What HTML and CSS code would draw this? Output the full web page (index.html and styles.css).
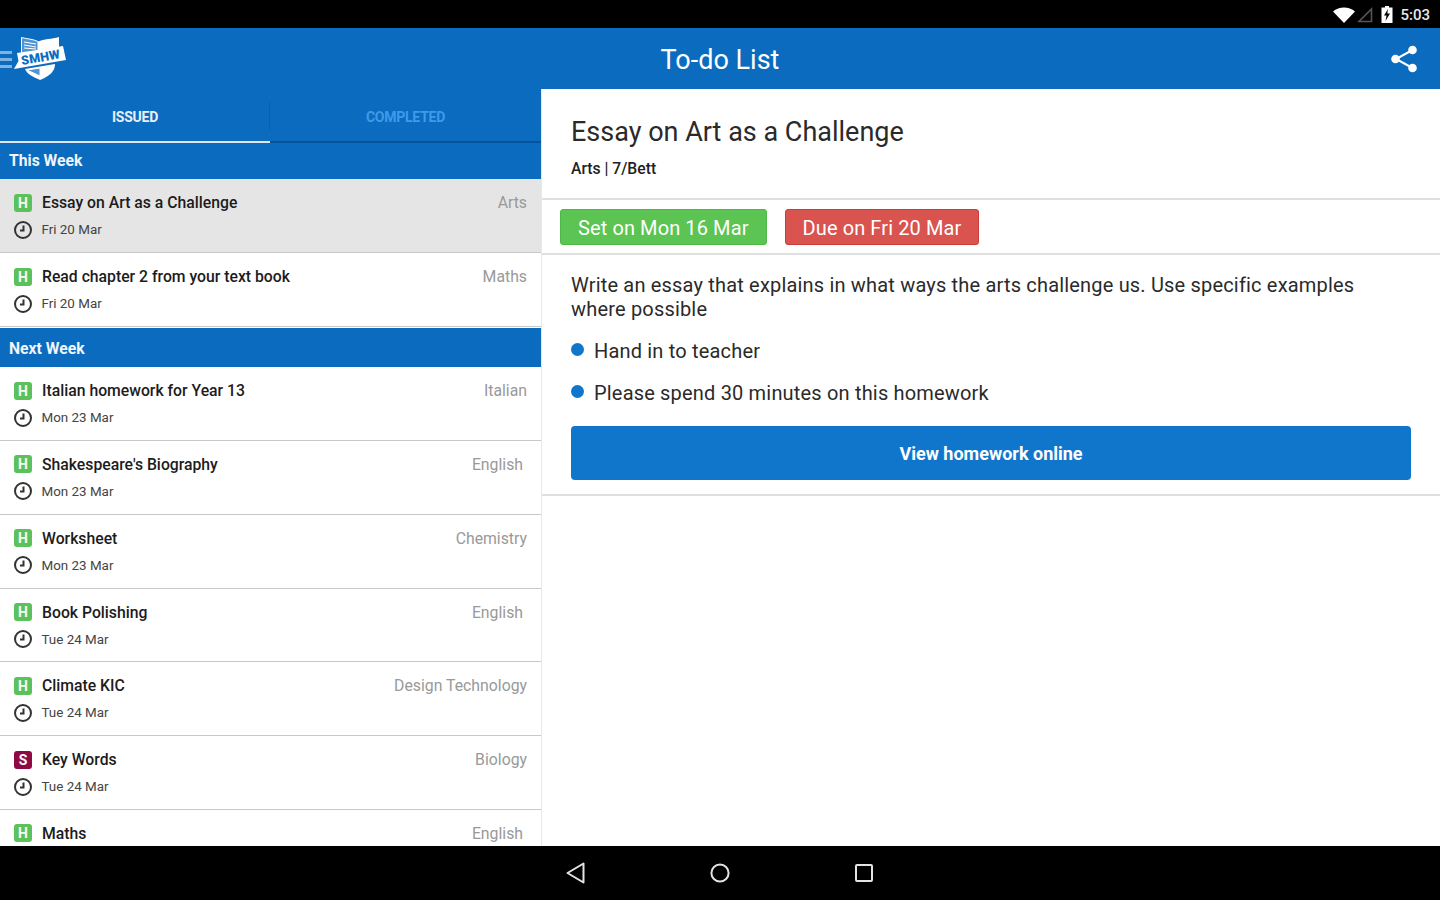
FILE: index.html
```html
<!DOCTYPE html>
<html lang="en">
<head>
    <meta charset="UTF-8">
    <title>To-do List</title>
    <link rel="stylesheet" href="styles.css">
</head>
<body>
    <div class="status-bar">
        <svg class="wifi" width="22" height="16" viewBox="0 0 22 16"><path d="M0 4.5 C6 -1 16 -1 22 4.5 L11 16 Z" fill="#fff"/></svg>
        <svg class="signal" width="16" height="16" viewBox="0 0 16 16"><path d="M14.5 2 V14.5 H2 Z" fill="none" stroke="#555" stroke-width="1.6"/></svg>
        <svg class="battery" width="12" height="17" viewBox="0 0 12 17"><path d="M4 0 H8 V1.5 H11.5 V17 H0.5 V1.5 H4 Z" fill="#fff"/><path d="M7 3 L3 9.5 H5.5 L4.5 15 L9 7.5 H6.3 Z" fill="#000"/></svg>
        <span class="clock">5:03</span>
    </div>

    <header class="app-bar">
        <div class="brand">
            <div class="burger"><span></span><span></span><span></span></div>
            <svg class="logo" width="54" height="44" viewBox="0 0 54 44">
                <path d="M7.5 0.5 C13 2 19 2 24 4.5 V14 L7.5 17 Z" fill="#4f94d4" stroke="#fff" stroke-width="1"/>
                <path d="M10 5 L22 7 M10 8 L22 10 M10 11 L22 12" stroke="#fff" stroke-width="1.2"/>
                <path d="M24 4.5 C30 2 38 2 45 0 V10 L24 14 Z" fill="#fff"/>
                <path d="M11 32 L41 27 C41 34 36 39 26 43 C19 40 13 37 11 32 Z" fill="#fff"/>
                <path d="M13 33 L26 31 V39 Z" fill="#4f94d4" stroke="#fff" stroke-width="1"/>
                <path d="M3 16 L49 9 L52 23 L0 32 L4.5 24 Z" fill="#fff"/>
                <text x="8" y="28" class="logo-text" transform="rotate(-10 8 28)">SMHW</text>
            </svg>
        </div>
        <h1 class="app-title">To-do List</h1>
        <svg class="share" width="28" height="28" viewBox="0 0 28 28">
            <path d="M22.5 5 L6 14 L22.5 23" fill="none" stroke="#fff" stroke-width="2"/>
            <circle cx="22.5" cy="5" r="4.3" fill="#fff"/>
            <circle cx="5.5" cy="14" r="4.3" fill="#fff"/>
            <circle cx="22.5" cy="23" r="4.3" fill="#fff"/>
        </svg>
    </header>

    <main class="content">
        <section class="list-pane">
            <div class="tabs">
                <div class="tab tab-active">ISSUED</div>
                <div class="tab">COMPLETED</div>
            </div>

            <div class="group-title group-first">This Week</div>
            <div class="row row-selected">
                <div class="row-line">
                    <span class="badge">H</span>
                    <span class="row-title">Essay on Art as a Challenge</span>
                    <span class="row-subject">Arts</span>
                </div>
                <div class="row-line row-date">
                    <svg class="clock-icon" viewBox="0 0 18 18"><circle cx="9" cy="9" r="8"/><path d="M9.5 4.5 V9.5 H6"/></svg>
                    <span>Fri 20 Mar</span>
                </div>
            </div>
            <div class="row">
                <div class="row-line">
                    <span class="badge">H</span>
                    <span class="row-title">Read chapter 2 from your text book</span>
                    <span class="row-subject">Maths</span>
                </div>
                <div class="row-line row-date">
                    <svg class="clock-icon" viewBox="0 0 18 18"><circle cx="9" cy="9" r="8"/><path d="M9.5 4.5 V9.5 H6"/></svg>
                    <span>Fri 20 Mar</span>
                </div>
            </div>

            <div class="group-title">Next Week</div>
            <div class="row">
                <div class="row-line">
                    <span class="badge">H</span>
                    <span class="row-title">Italian homework for Year 13</span>
                    <span class="row-subject">Italian</span>
                </div>
                <div class="row-line row-date">
                    <svg class="clock-icon" viewBox="0 0 18 18"><circle cx="9" cy="9" r="8"/><path d="M9.5 4.5 V9.5 H6"/></svg>
                    <span>Mon 23 Mar</span>
                </div>
            </div>
            <div class="row">
                <div class="row-line">
                    <span class="badge">H</span>
                    <span class="row-title">Shakespeare's Biography</span>
                    <span class="row-subject subject-inset">English</span>
                </div>
                <div class="row-line row-date">
                    <svg class="clock-icon" viewBox="0 0 18 18"><circle cx="9" cy="9" r="8"/><path d="M9.5 4.5 V9.5 H6"/></svg>
                    <span>Mon 23 Mar</span>
                </div>
            </div>
            <div class="row">
                <div class="row-line">
                    <span class="badge">H</span>
                    <span class="row-title">Worksheet</span>
                    <span class="row-subject">Chemistry</span>
                </div>
                <div class="row-line row-date">
                    <svg class="clock-icon" viewBox="0 0 18 18"><circle cx="9" cy="9" r="8"/><path d="M9.5 4.5 V9.5 H6"/></svg>
                    <span>Mon 23 Mar</span>
                </div>
            </div>
            <div class="row">
                <div class="row-line">
                    <span class="badge">H</span>
                    <span class="row-title">Book Polishing</span>
                    <span class="row-subject subject-inset">English</span>
                </div>
                <div class="row-line row-date">
                    <svg class="clock-icon" viewBox="0 0 18 18"><circle cx="9" cy="9" r="8"/><path d="M9.5 4.5 V9.5 H6"/></svg>
                    <span>Tue 24 Mar</span>
                </div>
            </div>
            <div class="row">
                <div class="row-line">
                    <span class="badge">H</span>
                    <span class="row-title">Climate KIC</span>
                    <span class="row-subject">Design Technology</span>
                </div>
                <div class="row-line row-date">
                    <svg class="clock-icon" viewBox="0 0 18 18"><circle cx="9" cy="9" r="8"/><path d="M9.5 4.5 V9.5 H6"/></svg>
                    <span>Tue 24 Mar</span>
                </div>
            </div>
            <div class="row">
                <div class="row-line">
                    <span class="badge badge-s">S</span>
                    <span class="row-title">Key Words</span>
                    <span class="row-subject">Biology</span>
                </div>
                <div class="row-line row-date">
                    <svg class="clock-icon" viewBox="0 0 18 18"><circle cx="9" cy="9" r="8"/><path d="M9.5 4.5 V9.5 H6"/></svg>
                    <span>Tue 24 Mar</span>
                </div>
            </div>
            <div class="row">
                <div class="row-line">
                    <span class="badge">H</span>
                    <span class="row-title">Maths</span>
                    <span class="row-subject subject-inset">English</span>
                </div>
            </div>
        </section>

        <section class="detail-pane">
            <div class="detail-head">
                <h2>Essay on Art as a Challenge</h2>
                <p>Arts | 7/Bett</p>
            </div>
            <div class="detail-dates">
                <span class="pill pill-set">Set on Mon 16 Mar</span>
                <span class="pill pill-due">Due on Fri 20 Mar</span>
            </div>
            <div class="detail-body">
                <p class="description">Write an essay that explains in what ways the arts challenge us. Use specific examples where possible</p>
                <ul class="notes">
                    <li>Hand in to teacher</li>
                    <li>Please spend 30 minutes on this homework</li>
                </ul>
                <button class="view-button">View homework online</button>
            </div>
        </section>
    </main>

    <footer class="nav-bar">
        <svg width="20" height="22" viewBox="0 0 20 22"><path d="M17.5 1.5 V20.5 L1.5 11 Z" fill="none" stroke="#e4e4e4" stroke-width="2" stroke-linejoin="round"/></svg>
        <svg width="20" height="20" viewBox="0 0 20 20"><circle cx="10" cy="10" r="8.6" fill="none" stroke="#e4e4e4" stroke-width="2"/></svg>
        <svg width="18" height="18" viewBox="0 0 18 18"><rect x="1" y="1" width="16" height="16" rx="1" fill="none" stroke="#e4e4e4" stroke-width="2"/></svg>
    </footer>
</body>
</html>
```

FILE: styles.css
```css
* {
    margin: 0;
    padding: 0;
    box-sizing: border-box;
}

body {
    width: 1440px;
    height: 900px;
    overflow: hidden;
    display: flex;
    flex-direction: column;
    font-family: Roboto, sans-serif;
    background: white;
}

.status-bar {
    height: 28px;
    background: black;
    display: flex;
    align-items: center;
    justify-content: flex-end;
    padding: 1px 10px 0 0;
    flex-shrink: 0;
}

.wifi {
    margin-right: 2px;
}

.signal {
    margin-right: 8px;
}

.battery {
    margin-right: 7px;
}

.clock {
    color: #e8e8e8;
    font-size: 15px;
    font-weight: 500;
}

.app-bar {
    height: 61px;
    background: #0a6bbf;
    display: grid;
    grid-template-columns: 1fr auto 1fr;
    align-items: center;
    flex-shrink: 0;
}

.brand {
    display: flex;
    align-items: center;
}

.burger {
    width: 12px;
    display: flex;
    flex-direction: column;
    gap: 4px;
    margin-top: 1px;
}

.burger span {
    height: 3px;
    background: #7fb2e0;
}

.logo {
    margin: 0 0 0 2px;
}

.logo-text {
    font-size: 12.5px;
    font-weight: 900;
    letter-spacing: 0.2px;
    fill: #0a6bbf;
}

.app-title {
    color: white;
    font-size: 27px;
    font-weight: 400;
    margin-top: 3px;
}

.share {
    justify-self: end;
    margin: 0 22px 0 0;
}

.content {
    flex: 1;
    min-height: 0;
    display: flex;
}

.list-pane {
    width: 541px;
    flex-shrink: 0;
    overflow: hidden;
}

.tabs {
    height: 54px;
    background: #0a6bbf;
    display: flex;
}

.tab {
    width: 270px;
    display: flex;
    align-items: center;
    justify-content: center;
    padding-top: 3px;
    font-size: 14px;
    letter-spacing: -0.25px;
    font-weight: 700;
    color: #3d9be9;
    border-bottom: 2px solid #07539b;
    flex-grow: 1;
    position: relative;
}

.tab-active {
    color: #e8f0f8;
    border-bottom-color: #dfe6ec;
    flex-grow: 0;
}

.tab-active:after {
    content: "";
    position: absolute;
    right: 0;
    top: 13px;
    height: 28px;
    width: 1px;
    background: #0a5eab;
}

.group-title {
    height: 39.2px;
    background: #0a6bbf;
    color: #f0f5fa;
    font-size: 15.7px;
    font-weight: 700;
    padding: 11px 9px 0;
    margin-top: 1px;
}

.group-first {
    height: 36.4px;
    padding-top: 8px;
    margin-top: 0;
}

.row {
    height: 73.8px;
    padding: 13px 14px 0;
    border-bottom: 1px solid #c8c8c8;
}

.row-selected {
    background: #e5e5e5;
}

.row-line {
    display: flex;
    align-items: center;
    height: 21px;
}

.row-date {
    margin-top: 6px;
    font-size: 13.4px;
    color: #444;
}

.badge {
    width: 18px;
    height: 18px;
    border-radius: 3px;
    background: #5cc15a;
    color: #f4fbf4;
    font-size: 14px;
    font-weight: 700;
    display: flex;
    align-items: center;
    justify-content: center;
    margin-right: 10px;
}

.badge-s {
    background: #8f0a45;
}

.row-title {
    font-size: 15.75px;
    font-weight: 500;
    color: #1c1c1c;
    flex: 1;
}

.row-subject {
    font-size: 15.8px;
    color: #999;
}

.subject-inset {
    margin-right: 4px;
}

.clock-icon {
    width: 18px;
    height: 18px;
    margin: 0 10px 0 -0.5px;
    fill: none;
    stroke: #333;
    stroke-width: 2;
}

.detail-pane {
    flex: 1;
    min-width: 0;
    border-left: 1px solid #e8e8e8;
}

.detail-head {
    height: 111px;
    padding: 27px 29px 0;
    border-bottom: 2px solid #e0e0e0;
}

.detail-head h2 {
    font-size: 27px;
    font-weight: 400;
    color: #2a2a2a;
}

.detail-head p {
    margin-top: 11px;
    font-size: 15.7px;
    font-weight: 500;
    color: #222;
}

.detail-dates {
    height: 55px;
    padding: 9px 18px 0;
    display: flex;
    gap: 18px;
    align-items: flex-start;
    border-bottom: 2px solid #e0e0e0;
}

.pill {
    height: 36px;
    padding: 2px 17px 0;
    border-radius: 3px;
    display: flex;
    align-items: center;
    color: white;
    font-size: 20px;
    letter-spacing: 0.1px;
}

.pill-set {
    background: #5cc452;
    border: 1px solid #4cb848;
}

.pill-due {
    background: #d9534f;
    border: 1px solid #cc3c38;
}

.detail-body {
    height: 241px;
    padding: 18px 29px 0;
    border-bottom: 2px solid #e0e0e0;
}

.description {
    font-size: 20px;
    line-height: 24px;
    color: #2a2a2a;
    letter-spacing: 0.18px;
}

.notes {
    list-style: none;
    margin-top: 18px;
}

.notes li {
    font-size: 20px;
    line-height: 24px;
    color: #2a2a2a;
    letter-spacing: 0.18px;
    margin-bottom: 18px;
    display: flex;
    align-items: center;
}

.notes li:before {
    content: "";
    width: 13px;
    height: 13px;
    border-radius: 50%;
    background: #0f76cc;
    margin: -3px 10px 0 0;
}

.view-button {
    display: block;
    width: 840px;
    height: 54px;
    margin-top: 21px;
    background: #0f76cc;
    border: none;
    border-radius: 4px;
    color: white;
    font-family: Roboto, sans-serif;
    font-size: 18px;
    font-weight: 700;
}

.nav-bar {
    height: 54px;
    background: black;
    flex-shrink: 0;
    display: flex;
    align-items: center;
    justify-content: center;
    gap: 124px;
    padding-right: 1px;
}

.nav-bar svg:last-child {
    margin-left: 1px;
}
```
